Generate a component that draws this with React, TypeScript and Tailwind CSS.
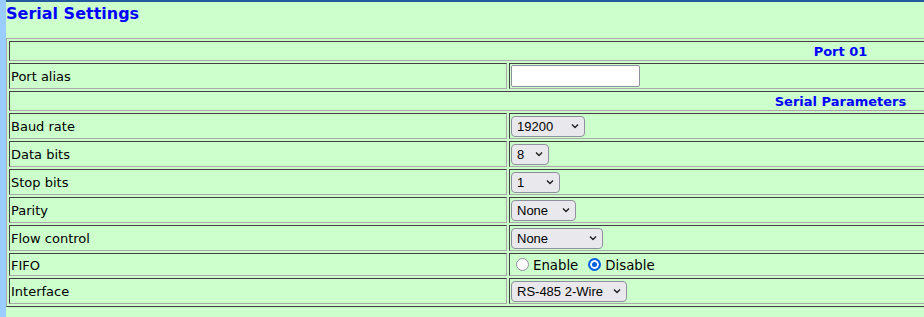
import React from 'react';

const cellBorder = 'border border-t-[#404040] border-l-[#404040] border-b-[#a9a9a9] border-r-[#a9a9a9]';

const Chevron = () => (
    <svg className="pointer-events-none absolute right-[6px] top-1/2 -translate-y-1/2" width="8" height="5" viewBox="0 0 8 5">
        <path d="M1 1 L4 4 L7 1" fill="none" stroke="#1a1a1a" strokeWidth="1.3" />
    </svg>
);

const Select = ({ options, value, className }: { options: string[], value: string, className: string }) => (
    <div className={`relative h-[21px] ${className}`}>
        <select
            defaultValue={value}
            className="appearance-none w-full h-full rounded-[4px] border border-[#8f8f9d] bg-[#e9e9ed] pl-[5px] pr-[16px] pt-[1px] text-[13px] leading-none text-black font-['Liberation_Sans',Arial,sans-serif] outline-none"
        >
            {options.map(o => <option key={o} value={o}>{o}</option>)}
        </select>
        <Chevron />
    </div>
);

const HeaderRow = ({ title }: { title: string }) => (
    <div className={`h-[20px] flex items-center justify-center px-[1px] pt-[2px] font-bold text-[#0000ff] ${cellBorder}`}>
        {title}
    </div>
);

const FieldRow = ({ label, height = 'h-[26px]', children }: { label: string, height?: string, children: React.ReactNode }) => (
    <div className="flex gap-[2px]">
        <div className={`w-[498px] shrink-0 ${height} flex items-center px-[1px] pt-[2px] ${cellBorder}`}>{label}</div>
        <div className={`flex-1 ${height} flex items-center px-[1px] ${cellBorder}`}>{children}</div>
    </div>
);

const Radio = ({ name, checked, label }: { name: string, checked?: boolean, label: string }) => (
    <label className="flex items-center">
        <input
            type="radio"
            name={name}
            defaultChecked={checked}
            className="appearance-none ml-[5px] mr-[4px] w-[13px] h-[13px] rounded-full border border-[#8f8f9d] bg-white checked:border-2 checked:border-[#0060df] checked:bg-[#0060df] checked:shadow-[inset_0_0_0_2px_#fff]"
        />
        <span className="pt-[2px] text-[13.3px]">{label}</span>
    </label>
);

export default function App() {
    return (
        <div className="min-h-screen w-full overflow-hidden bg-[#ccffcc] flex font-['DejaVu_Sans',Verdana,sans-serif] text-[13px] text-black">
            <div className="w-[6px] shrink-0 bg-[#99ccff]" />
            <div className="flex-1 min-w-0 border-t-2 border-[#235a9e]">
                <h1 className="pt-[2px] text-[16px] leading-[19px] font-bold text-[#0000ff]">Serial Settings</h1>

                <div className="mt-[15px] w-[1669px] p-[2px] flex flex-col gap-[2px] border border-t-[#a9a9a9] border-l-[#a9a9a9] border-b-[#404040] border-r-[#404040]">
                    <HeaderRow title="Port 01" />
                    <FieldRow label="Port alias">
                        <input type="text" className="w-[129px] h-[22px] rounded-[2px] border border-[#8f8f9d] bg-white px-[3px] outline-none" />
                    </FieldRow>
                    <HeaderRow title="Serial Parameters" />
                    <FieldRow label="Baud rate">
                        <Select className="w-[74px]" value="19200" options={['1200', '2400', '4800', '9600', '19200', '38400', '57600', '115200']} />
                    </FieldRow>
                    <FieldRow label="Data bits">
                        <Select className="w-[38px]" value="8" options={['5', '6', '7', '8']} />
                    </FieldRow>
                    <FieldRow label="Stop bits">
                        <Select className="w-[49px]" value="1" options={['1', '1.5', '2']} />
                    </FieldRow>
                    <FieldRow label="Parity">
                        <Select className="w-[65px]" value="None" options={['None', 'Odd', 'Even', 'Mark', 'Space']} />
                    </FieldRow>
                    <FieldRow label="Flow control">
                        <Select className="w-[92px]" value="None" options={['None', 'RTS/CTS', 'XON/XOFF']} />
                    </FieldRow>
                    <FieldRow label="FIFO" height="h-[23px]">
                        <Radio name="fifo" label="Enable" />
                        <span className="w-[5px]" />
                        <Radio name="fifo" label="Disable" checked />
                    </FieldRow>
                    <FieldRow label="Interface">
                        <Select className="w-[116px]" value="RS-485 2-Wire" options={['RS-232', 'RS-422', 'RS-485 2-Wire', 'RS-485 4-Wire']} />
                    </FieldRow>
                </div>
            </div>
        </div>
    );
}
